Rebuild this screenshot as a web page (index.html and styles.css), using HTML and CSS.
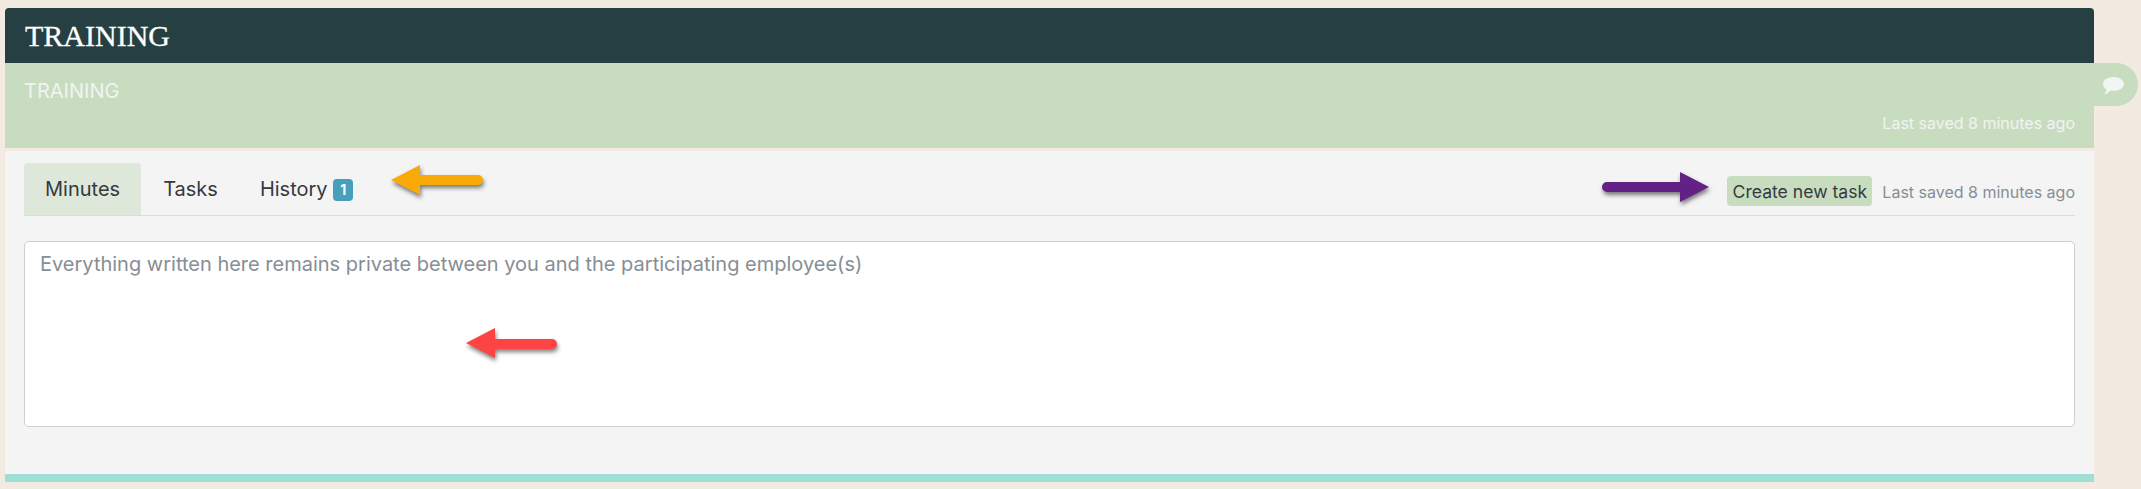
FILE: index.html
```html
<!doctype html>
<html>
<head>
    <title>Training</title>
<link rel="stylesheet" href="styles.css">
</head>
<body>
    <div class="panel">
        <div class="panel-title">TRAINING</div>
        <div class="panel-sub">
            <div class="sub-name">TRAINING</div>
            <div class="sub-saved">Last saved 8 minutes ago</div>
        </div>
        <a class="chat-tab">
            <svg viewBox="0 0 21 18" width="21" height="18"><path d="M10.5 0C16.3 0 21 2.9 21 6.900C21 10.900 16.300 13.800 10.500 13.800C9.400 13.800 8.400 13.700 7.400 13.500C5.700 15.500 3.300 17.300 1.500 17.600C2.600 16.100 3.200 14.200 3.300 12.300C1.300 11 0 9.100 0 6.900C0 2.900 4.700 0 10.500 0Z"/></svg>
        </a>
        <div class="panel-body">
            <div class="tabs">
                <a class="tab active">Minutes</a>
                <a class="tab">Tasks</a>
                <a class="tab">History <span class="badge">1</span></a>
                <div class="tabs-right">
                    <button class="new-task">Create new task</button>
                    <span class="saved">Last saved 8 minutes ago</span>
                </div>
            </div>
            <textarea class="minutes" placeholder="Everything written here remains private between you and the participating employee(s)"></textarea>
        </div>

        <!-- annotation arrows -->
        <svg class="arrow arrow-orange" viewBox="0 0 92 30" width="92" height="30"><path d="M0 15L29 0V10H87A5 5 0 0 1 87 20H29V30Z"/></svg>
        <svg class="arrow arrow-purple" viewBox="0 0 107 30" width="107" height="30"><path d="M107 15L78 0V10H5A5 5 0 0 0 5 20H78V30Z"/></svg>
        <svg class="arrow arrow-red" viewBox="0 0 91 30" width="91" height="30"><path d="M0 15L29 0V11H86A5 5 0 0 1 86 21H29V30Z"/></svg>
    </div>
</body>
</html>
```
FILE: styles.css
```css
html, body {
    margin: 0;
    height: 489px;
    overflow: hidden;
}
body {
    background-color: #f3ebe2;
    padding: 8px 47px 0 5px;
    font-family: Inter, "Liberation Sans", sans-serif;
    color: #343a40;
}
.panel {
    position: relative;
}
.panel-title {
    height: 55px;
    line-height: 55px;
    padding: 0 20px;
    background-color: #263f42;
    border-radius: 4px 4px 0 0;
    color: #fff;
    font-family: "Liberation Serif", serif;
    font-size: 30px;
    -webkit-text-stroke: 0.3px #fff;
}
.panel-sub {
    height: 85px;
    box-sizing: border-box;
    padding: 16px 19px 0 19px;
    background-color: #c8ddc0;
    color: #f1f3f1;
}
.sub-name {
    font-size: 20px;
    line-height: 24px;
}
.sub-saved {
    margin-top: 10px;
    text-align: right;
    font-size: 16px;
    line-height: 20px;
}
.chat-tab {
    position: absolute;
    left: 100%;
    top: 55px;
    width: 44px;
    height: 43px;
    background-color: #c8ddc0;
    border-radius: 0 22px 22px 0;
}
.chat-tab svg {
    display: block;
    margin: 14px 0 0 9px;
    fill: #f1f5f3;
}
.panel-body {
    margin-top: 3px;
    padding: 12px 19px 47px 19px;
    background-color: #f4f4f4;
    border-bottom: 8px solid #a0dfd5;
}
.tabs {
    display: flex;
    align-items: flex-end;
    height: 52px;
    box-sizing: content-box;
    border-bottom: 1px solid #dcdcdc;
}
.tab {
    display: block;
    height: 52px;
    box-sizing: border-box;
    padding: 14px 20px 0 22px;
    font-size: 20px;
    line-height: 24px;
    white-space: nowrap;
}
.tab.active {
    background-color: #dee8da;
    border: 1px solid #e2e4e0;
    border-bottom: 0;
    border-radius: 4px 4px 0 0;
    padding: 13px 20px 0 20px;
}
.badge {
    display: inline-block;
    vertical-align: 1px;
    width: 20px;
    height: 22px;
    background-color: #479fbb;
    border-radius: 4px;
    color: #fff;
    font-size: 14px;
    font-weight: 700;
    line-height: 22px;
    text-align: center;
}
.tabs-right {
    display: flex;
    align-items: center;
    gap: 10px;
    margin-left: auto;
    height: 30px;
    margin-bottom: 9px;
}
.new-task {
    height: 30px;
    width: 145px;
    padding: 0;
    background-color: #c8ddc0;
    border: none;
    border-radius: 4px;
    color: #343a40;
    font-family: inherit;
    font-size: 17.600px;
}
.saved {
    color: #868e96;
    font-size: 16px;
    padding-top: 2px;
}
.minutes {
    display: block;
    width: 100%;
    height: 186px;
    box-sizing: border-box;
    margin-top: 25px;
    padding: 10px 15px;
    background-color: #fff;
    border: 1px solid #cfcfcf;
    border-radius: 5px;
    font-family: inherit;
    font-size: 20px;
    line-height: 24px;
    resize: none;
}
.minutes::placeholder {
    color: #868e96;
}
.arrow {
    position: absolute;
    filter: drop-shadow(1px 3px 2px rgba(0, 0, 0, 0.5));
}
.arrow-orange {
    left: 386px;
    top: 157px;
    fill: #f9aa08;
}
.arrow-purple {
    left: 1597px;
    top: 164px;
    fill: #642185;
}
.arrow-red {
    left: 461px;
    top: 320px;
    fill: #fe4343;
}
```
